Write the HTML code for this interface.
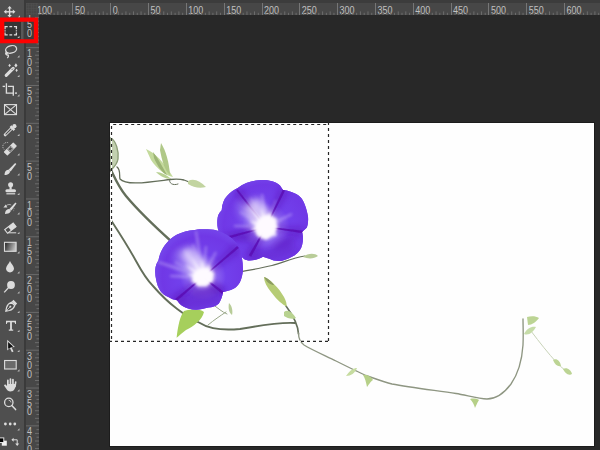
<!DOCTYPE html>
<html><head><meta charset="utf-8"><style>
html,body{margin:0;padding:0;width:600px;height:450px;overflow:hidden;background:#282828}
svg{display:block}
.rt{font-family:"Liberation Sans",sans-serif;font-size:10px;fill:#c0c0c0}
.rv{font-family:"Liberation Sans",sans-serif;font-size:10px;fill:#c0c0c0;text-anchor:middle}
</style></head><body>
<svg width="600" height="450" viewBox="0 0 600 450">
<rect x="0" y="0" width="600" height="450" fill="#282828"/><rect x="0" y="0" width="600" height="3" fill="#3c3c3c"/><rect x="26" y="3" width="574" height="12" fill="#474747"/><g clip-path="url(#hclip)"><rect x="19.53" y="11.4" width="1" height="3.6" fill="#6c6c6c"/><rect x="23.31" y="12.8" width="1" height="2.2" fill="#6c6c6c"/><rect x="27.10" y="11.4" width="1" height="3.6" fill="#6c6c6c"/><rect x="30.88" y="12.8" width="1" height="2.2" fill="#6c6c6c"/><rect x="35" y="3" width="1" height="12" fill="#767676"/><text transform="translate(37.06,13.6) scale(0.9,1)" class="rt">100</text><rect x="38.44" y="12.8" width="1" height="2.2" fill="#6c6c6c"/><rect x="42.22" y="11.4" width="1" height="3.6" fill="#6c6c6c"/><rect x="46.01" y="12.8" width="1" height="2.2" fill="#6c6c6c"/><rect x="49.79" y="11.4" width="1" height="3.6" fill="#6c6c6c"/><rect x="53.57" y="12.8" width="1" height="2.2" fill="#6c6c6c"/><rect x="57.35" y="11.4" width="1" height="3.6" fill="#6c6c6c"/><rect x="61.13" y="12.8" width="1" height="2.2" fill="#6c6c6c"/><rect x="64.92" y="11.4" width="1" height="3.6" fill="#6c6c6c"/><rect x="68.70" y="12.8" width="1" height="2.2" fill="#6c6c6c"/><rect x="72" y="3" width="1" height="12" fill="#767676"/><text transform="translate(74.88,13.6) scale(0.9,1)" class="rt">50</text><rect x="76.26" y="12.8" width="1" height="2.2" fill="#6c6c6c"/><rect x="80.04" y="11.4" width="1" height="3.6" fill="#6c6c6c"/><rect x="83.83" y="12.8" width="1" height="2.2" fill="#6c6c6c"/><rect x="87.61" y="11.4" width="1" height="3.6" fill="#6c6c6c"/><rect x="91.39" y="12.8" width="1" height="2.2" fill="#6c6c6c"/><rect x="95.17" y="11.4" width="1" height="3.6" fill="#6c6c6c"/><rect x="98.95" y="12.8" width="1" height="2.2" fill="#6c6c6c"/><rect x="102.74" y="11.4" width="1" height="3.6" fill="#6c6c6c"/><rect x="106.52" y="12.8" width="1" height="2.2" fill="#6c6c6c"/><rect x="110" y="3" width="1" height="12" fill="#767676"/><text transform="translate(112.70,13.6) scale(0.9,1)" class="rt">0</text><rect x="114.08" y="12.8" width="1" height="2.2" fill="#6c6c6c"/><rect x="117.86" y="11.4" width="1" height="3.6" fill="#6c6c6c"/><rect x="121.65" y="12.8" width="1" height="2.2" fill="#6c6c6c"/><rect x="125.43" y="11.4" width="1" height="3.6" fill="#6c6c6c"/><rect x="129.21" y="12.8" width="1" height="2.2" fill="#6c6c6c"/><rect x="132.99" y="11.4" width="1" height="3.6" fill="#6c6c6c"/><rect x="136.77" y="12.8" width="1" height="2.2" fill="#6c6c6c"/><rect x="140.56" y="11.4" width="1" height="3.6" fill="#6c6c6c"/><rect x="144.34" y="12.8" width="1" height="2.2" fill="#6c6c6c"/><rect x="148" y="3" width="1" height="12" fill="#767676"/><text transform="translate(150.52,13.6) scale(0.9,1)" class="rt">50</text><rect x="151.90" y="12.8" width="1" height="2.2" fill="#6c6c6c"/><rect x="155.68" y="11.4" width="1" height="3.6" fill="#6c6c6c"/><rect x="159.47" y="12.8" width="1" height="2.2" fill="#6c6c6c"/><rect x="163.25" y="11.4" width="1" height="3.6" fill="#6c6c6c"/><rect x="167.03" y="12.8" width="1" height="2.2" fill="#6c6c6c"/><rect x="170.81" y="11.4" width="1" height="3.6" fill="#6c6c6c"/><rect x="174.59" y="12.8" width="1" height="2.2" fill="#6c6c6c"/><rect x="178.38" y="11.4" width="1" height="3.6" fill="#6c6c6c"/><rect x="182.16" y="12.8" width="1" height="2.2" fill="#6c6c6c"/><rect x="186" y="3" width="1" height="12" fill="#767676"/><text transform="translate(188.34,13.6) scale(0.9,1)" class="rt">100</text><rect x="189.72" y="12.8" width="1" height="2.2" fill="#6c6c6c"/><rect x="193.50" y="11.4" width="1" height="3.6" fill="#6c6c6c"/><rect x="197.29" y="12.8" width="1" height="2.2" fill="#6c6c6c"/><rect x="201.07" y="11.4" width="1" height="3.6" fill="#6c6c6c"/><rect x="204.85" y="12.8" width="1" height="2.2" fill="#6c6c6c"/><rect x="208.63" y="11.4" width="1" height="3.6" fill="#6c6c6c"/><rect x="212.41" y="12.8" width="1" height="2.2" fill="#6c6c6c"/><rect x="216.20" y="11.4" width="1" height="3.6" fill="#6c6c6c"/><rect x="219.98" y="12.8" width="1" height="2.2" fill="#6c6c6c"/><rect x="224" y="3" width="1" height="12" fill="#767676"/><text transform="translate(226.16,13.6) scale(0.9,1)" class="rt">150</text><rect x="227.54" y="12.8" width="1" height="2.2" fill="#6c6c6c"/><rect x="231.32" y="11.4" width="1" height="3.6" fill="#6c6c6c"/><rect x="235.11" y="12.8" width="1" height="2.2" fill="#6c6c6c"/><rect x="238.89" y="11.4" width="1" height="3.6" fill="#6c6c6c"/><rect x="242.67" y="12.8" width="1" height="2.2" fill="#6c6c6c"/><rect x="246.45" y="11.4" width="1" height="3.6" fill="#6c6c6c"/><rect x="250.23" y="12.8" width="1" height="2.2" fill="#6c6c6c"/><rect x="254.02" y="11.4" width="1" height="3.6" fill="#6c6c6c"/><rect x="257.80" y="12.8" width="1" height="2.2" fill="#6c6c6c"/><rect x="262" y="3" width="1" height="12" fill="#767676"/><text transform="translate(263.98,13.6) scale(0.9,1)" class="rt">200</text><rect x="265.36" y="12.8" width="1" height="2.2" fill="#6c6c6c"/><rect x="269.14" y="11.4" width="1" height="3.6" fill="#6c6c6c"/><rect x="272.93" y="12.8" width="1" height="2.2" fill="#6c6c6c"/><rect x="276.71" y="11.4" width="1" height="3.6" fill="#6c6c6c"/><rect x="280.49" y="12.8" width="1" height="2.2" fill="#6c6c6c"/><rect x="284.27" y="11.4" width="1" height="3.6" fill="#6c6c6c"/><rect x="288.05" y="12.8" width="1" height="2.2" fill="#6c6c6c"/><rect x="291.84" y="11.4" width="1" height="3.6" fill="#6c6c6c"/><rect x="295.62" y="12.8" width="1" height="2.2" fill="#6c6c6c"/><rect x="299" y="3" width="1" height="12" fill="#767676"/><text transform="translate(301.80,13.6) scale(0.9,1)" class="rt">250</text><rect x="303.18" y="12.8" width="1" height="2.2" fill="#6c6c6c"/><rect x="306.96" y="11.4" width="1" height="3.6" fill="#6c6c6c"/><rect x="310.75" y="12.8" width="1" height="2.2" fill="#6c6c6c"/><rect x="314.53" y="11.4" width="1" height="3.6" fill="#6c6c6c"/><rect x="318.31" y="12.8" width="1" height="2.2" fill="#6c6c6c"/><rect x="322.09" y="11.4" width="1" height="3.6" fill="#6c6c6c"/><rect x="325.87" y="12.8" width="1" height="2.2" fill="#6c6c6c"/><rect x="329.66" y="11.4" width="1" height="3.6" fill="#6c6c6c"/><rect x="333.44" y="12.8" width="1" height="2.2" fill="#6c6c6c"/><rect x="337" y="3" width="1" height="12" fill="#767676"/><text transform="translate(339.62,13.6) scale(0.9,1)" class="rt">300</text><rect x="341.00" y="12.8" width="1" height="2.2" fill="#6c6c6c"/><rect x="344.78" y="11.4" width="1" height="3.6" fill="#6c6c6c"/><rect x="348.57" y="12.8" width="1" height="2.2" fill="#6c6c6c"/><rect x="352.35" y="11.4" width="1" height="3.6" fill="#6c6c6c"/><rect x="356.13" y="12.8" width="1" height="2.2" fill="#6c6c6c"/><rect x="359.91" y="11.4" width="1" height="3.6" fill="#6c6c6c"/><rect x="363.69" y="12.8" width="1" height="2.2" fill="#6c6c6c"/><rect x="367.48" y="11.4" width="1" height="3.6" fill="#6c6c6c"/><rect x="371.26" y="12.8" width="1" height="2.2" fill="#6c6c6c"/><rect x="375" y="3" width="1" height="12" fill="#767676"/><text transform="translate(377.44,13.6) scale(0.9,1)" class="rt">350</text><rect x="378.82" y="12.8" width="1" height="2.2" fill="#6c6c6c"/><rect x="382.60" y="11.4" width="1" height="3.6" fill="#6c6c6c"/><rect x="386.39" y="12.8" width="1" height="2.2" fill="#6c6c6c"/><rect x="390.17" y="11.4" width="1" height="3.6" fill="#6c6c6c"/><rect x="393.95" y="12.8" width="1" height="2.2" fill="#6c6c6c"/><rect x="397.73" y="11.4" width="1" height="3.6" fill="#6c6c6c"/><rect x="401.51" y="12.8" width="1" height="2.2" fill="#6c6c6c"/><rect x="405.30" y="11.4" width="1" height="3.6" fill="#6c6c6c"/><rect x="409.08" y="12.8" width="1" height="2.2" fill="#6c6c6c"/><rect x="413" y="3" width="1" height="12" fill="#767676"/><text transform="translate(415.26,13.6) scale(0.9,1)" class="rt">400</text><rect x="416.64" y="12.8" width="1" height="2.2" fill="#6c6c6c"/><rect x="420.42" y="11.4" width="1" height="3.6" fill="#6c6c6c"/><rect x="424.21" y="12.8" width="1" height="2.2" fill="#6c6c6c"/><rect x="427.99" y="11.4" width="1" height="3.6" fill="#6c6c6c"/><rect x="431.77" y="12.8" width="1" height="2.2" fill="#6c6c6c"/><rect x="435.55" y="11.4" width="1" height="3.6" fill="#6c6c6c"/><rect x="439.33" y="12.8" width="1" height="2.2" fill="#6c6c6c"/><rect x="443.12" y="11.4" width="1" height="3.6" fill="#6c6c6c"/><rect x="446.90" y="12.8" width="1" height="2.2" fill="#6c6c6c"/><rect x="451" y="3" width="1" height="12" fill="#767676"/><text transform="translate(453.08,13.6) scale(0.9,1)" class="rt">450</text><rect x="454.46" y="12.8" width="1" height="2.2" fill="#6c6c6c"/><rect x="458.24" y="11.4" width="1" height="3.6" fill="#6c6c6c"/><rect x="462.03" y="12.8" width="1" height="2.2" fill="#6c6c6c"/><rect x="465.81" y="11.4" width="1" height="3.6" fill="#6c6c6c"/><rect x="469.59" y="12.8" width="1" height="2.2" fill="#6c6c6c"/><rect x="473.37" y="11.4" width="1" height="3.6" fill="#6c6c6c"/><rect x="477.15" y="12.8" width="1" height="2.2" fill="#6c6c6c"/><rect x="480.94" y="11.4" width="1" height="3.6" fill="#6c6c6c"/><rect x="484.72" y="12.8" width="1" height="2.2" fill="#6c6c6c"/><rect x="488" y="3" width="1" height="12" fill="#767676"/><text transform="translate(490.90,13.6) scale(0.9,1)" class="rt">500</text><rect x="492.28" y="12.8" width="1" height="2.2" fill="#6c6c6c"/><rect x="496.06" y="11.4" width="1" height="3.6" fill="#6c6c6c"/><rect x="499.85" y="12.8" width="1" height="2.2" fill="#6c6c6c"/><rect x="503.63" y="11.4" width="1" height="3.6" fill="#6c6c6c"/><rect x="507.41" y="12.8" width="1" height="2.2" fill="#6c6c6c"/><rect x="511.19" y="11.4" width="1" height="3.6" fill="#6c6c6c"/><rect x="514.97" y="12.8" width="1" height="2.2" fill="#6c6c6c"/><rect x="518.76" y="11.4" width="1" height="3.6" fill="#6c6c6c"/><rect x="522.54" y="12.8" width="1" height="2.2" fill="#6c6c6c"/><rect x="526" y="3" width="1" height="12" fill="#767676"/><text transform="translate(528.72,13.6) scale(0.9,1)" class="rt">550</text><rect x="530.10" y="12.8" width="1" height="2.2" fill="#6c6c6c"/><rect x="533.88" y="11.4" width="1" height="3.6" fill="#6c6c6c"/><rect x="537.67" y="12.8" width="1" height="2.2" fill="#6c6c6c"/><rect x="541.45" y="11.4" width="1" height="3.6" fill="#6c6c6c"/><rect x="545.23" y="12.8" width="1" height="2.2" fill="#6c6c6c"/><rect x="549.01" y="11.4" width="1" height="3.6" fill="#6c6c6c"/><rect x="552.79" y="12.8" width="1" height="2.2" fill="#6c6c6c"/><rect x="556.58" y="11.4" width="1" height="3.6" fill="#6c6c6c"/><rect x="560.36" y="12.8" width="1" height="2.2" fill="#6c6c6c"/><rect x="564" y="3" width="1" height="12" fill="#767676"/><text transform="translate(566.54,13.6) scale(0.9,1)" class="rt">600</text><rect x="567.92" y="12.8" width="1" height="2.2" fill="#6c6c6c"/><rect x="571.70" y="11.4" width="1" height="3.6" fill="#6c6c6c"/><rect x="575.49" y="12.8" width="1" height="2.2" fill="#6c6c6c"/><rect x="579.27" y="11.4" width="1" height="3.6" fill="#6c6c6c"/><rect x="583.05" y="12.8" width="1" height="2.2" fill="#6c6c6c"/><rect x="586.83" y="11.4" width="1" height="3.6" fill="#6c6c6c"/><rect x="590.61" y="12.8" width="1" height="2.2" fill="#6c6c6c"/><rect x="594.40" y="11.4" width="1" height="3.6" fill="#6c6c6c"/><rect x="598.18" y="12.8" width="1" height="2.2" fill="#6c6c6c"/><rect x="602" y="3" width="1" height="12" fill="#767676"/><text transform="translate(604.36,13.6) scale(0.9,1)" class="rt">650</text></g><rect x="0" y="0" width="24" height="450" fill="#4f4f4f"/><rect x="24" y="0" width="2" height="450" fill="#3a3a3a"/><rect x="26" y="15" width="13" height="435" fill="#474747"/><rect x="26" y="3" width="12" height="12" fill="#474747"/><rect x="26.0" y="3" width="0.6" height="12" fill="#505050"/><rect x="28.5" y="3" width="0.6" height="12" fill="#505050"/><rect x="31.0" y="3" width="0.6" height="12" fill="#505050"/><rect x="33.5" y="3" width="0.6" height="12" fill="#505050"/><rect x="36.0" y="3" width="0.6" height="12" fill="#505050"/><rect x="26" y="3.0" width="12" height="0.6" fill="#505050"/><rect x="26" y="5.5" width="12" height="0.6" fill="#505050"/><rect x="26" y="8.0" width="12" height="0.6" fill="#505050"/><rect x="26" y="10.5" width="12" height="0.6" fill="#505050"/><rect x="26" y="13.0" width="12" height="0.6" fill="#505050"/><defs><clipPath id="vclip"><rect x="26" y="15" width="13" height="435"/></clipPath><clipPath id="hclip"><rect x="38" y="3" width="562" height="12"/></clipPath></defs><g clip-path="url(#vclip)"><rect x="26" y="9.34" width="13" height="1" fill="#6a6a6a"/><text transform="translate(29.6,19.44) scale(0.9,1)" class="rv">1</text><text transform="translate(29.6,28.34) scale(0.9,1)" class="rv">5</text><text transform="translate(29.6,37.24) scale(0.9,1)" class="rv">0</text><rect x="36.5" y="13.12" width="2.5" height="1" fill="#6c6c6c"/><rect x="35" y="16.90" width="4" height="1" fill="#6c6c6c"/><rect x="36.5" y="20.69" width="2.5" height="1" fill="#6c6c6c"/><rect x="35" y="24.47" width="4" height="1" fill="#6c6c6c"/><rect x="36.5" y="28.25" width="2.5" height="1" fill="#6c6c6c"/><rect x="35" y="32.03" width="4" height="1" fill="#6c6c6c"/><rect x="36.5" y="35.81" width="2.5" height="1" fill="#6c6c6c"/><rect x="35" y="39.60" width="4" height="1" fill="#6c6c6c"/><rect x="36.5" y="43.38" width="2.5" height="1" fill="#6c6c6c"/><rect x="26" y="47.16" width="13" height="1" fill="#6a6a6a"/><text transform="translate(29.6,57.26) scale(0.9,1)" class="rv">1</text><text transform="translate(29.6,66.16) scale(0.9,1)" class="rv">0</text><text transform="translate(29.6,75.06) scale(0.9,1)" class="rv">0</text><rect x="36.5" y="50.94" width="2.5" height="1" fill="#6c6c6c"/><rect x="35" y="54.72" width="4" height="1" fill="#6c6c6c"/><rect x="36.5" y="58.51" width="2.5" height="1" fill="#6c6c6c"/><rect x="35" y="62.29" width="4" height="1" fill="#6c6c6c"/><rect x="36.5" y="66.07" width="2.5" height="1" fill="#6c6c6c"/><rect x="35" y="69.85" width="4" height="1" fill="#6c6c6c"/><rect x="36.5" y="73.63" width="2.5" height="1" fill="#6c6c6c"/><rect x="35" y="77.42" width="4" height="1" fill="#6c6c6c"/><rect x="36.5" y="81.20" width="2.5" height="1" fill="#6c6c6c"/><rect x="26" y="84.98" width="13" height="1" fill="#6a6a6a"/><text transform="translate(29.6,95.08) scale(0.9,1)" class="rv">5</text><text transform="translate(29.6,103.98) scale(0.9,1)" class="rv">0</text><rect x="36.5" y="88.76" width="2.5" height="1" fill="#6c6c6c"/><rect x="35" y="92.54" width="4" height="1" fill="#6c6c6c"/><rect x="36.5" y="96.33" width="2.5" height="1" fill="#6c6c6c"/><rect x="35" y="100.11" width="4" height="1" fill="#6c6c6c"/><rect x="36.5" y="103.89" width="2.5" height="1" fill="#6c6c6c"/><rect x="35" y="107.67" width="4" height="1" fill="#6c6c6c"/><rect x="36.5" y="111.45" width="2.5" height="1" fill="#6c6c6c"/><rect x="35" y="115.24" width="4" height="1" fill="#6c6c6c"/><rect x="36.5" y="119.02" width="2.5" height="1" fill="#6c6c6c"/><rect x="26" y="122.80" width="13" height="1" fill="#6a6a6a"/><text transform="translate(29.6,132.90) scale(0.9,1)" class="rv">0</text><rect x="36.5" y="126.58" width="2.5" height="1" fill="#6c6c6c"/><rect x="35" y="130.36" width="4" height="1" fill="#6c6c6c"/><rect x="36.5" y="134.15" width="2.5" height="1" fill="#6c6c6c"/><rect x="35" y="137.93" width="4" height="1" fill="#6c6c6c"/><rect x="36.5" y="141.71" width="2.5" height="1" fill="#6c6c6c"/><rect x="35" y="145.49" width="4" height="1" fill="#6c6c6c"/><rect x="36.5" y="149.27" width="2.5" height="1" fill="#6c6c6c"/><rect x="35" y="153.06" width="4" height="1" fill="#6c6c6c"/><rect x="36.5" y="156.84" width="2.5" height="1" fill="#6c6c6c"/><rect x="26" y="160.62" width="13" height="1" fill="#6a6a6a"/><text transform="translate(29.6,170.72) scale(0.9,1)" class="rv">5</text><text transform="translate(29.6,179.62) scale(0.9,1)" class="rv">0</text><rect x="36.5" y="164.40" width="2.5" height="1" fill="#6c6c6c"/><rect x="35" y="168.18" width="4" height="1" fill="#6c6c6c"/><rect x="36.5" y="171.97" width="2.5" height="1" fill="#6c6c6c"/><rect x="35" y="175.75" width="4" height="1" fill="#6c6c6c"/><rect x="36.5" y="179.53" width="2.5" height="1" fill="#6c6c6c"/><rect x="35" y="183.31" width="4" height="1" fill="#6c6c6c"/><rect x="36.5" y="187.09" width="2.5" height="1" fill="#6c6c6c"/><rect x="35" y="190.88" width="4" height="1" fill="#6c6c6c"/><rect x="36.5" y="194.66" width="2.5" height="1" fill="#6c6c6c"/><rect x="26" y="198.44" width="13" height="1" fill="#6a6a6a"/><text transform="translate(29.6,208.54) scale(0.9,1)" class="rv">1</text><text transform="translate(29.6,217.44) scale(0.9,1)" class="rv">0</text><text transform="translate(29.6,226.34) scale(0.9,1)" class="rv">0</text><rect x="36.5" y="202.22" width="2.5" height="1" fill="#6c6c6c"/><rect x="35" y="206.00" width="4" height="1" fill="#6c6c6c"/><rect x="36.5" y="209.79" width="2.5" height="1" fill="#6c6c6c"/><rect x="35" y="213.57" width="4" height="1" fill="#6c6c6c"/><rect x="36.5" y="217.35" width="2.5" height="1" fill="#6c6c6c"/><rect x="35" y="221.13" width="4" height="1" fill="#6c6c6c"/><rect x="36.5" y="224.91" width="2.5" height="1" fill="#6c6c6c"/><rect x="35" y="228.70" width="4" height="1" fill="#6c6c6c"/><rect x="36.5" y="232.48" width="2.5" height="1" fill="#6c6c6c"/><rect x="26" y="236.26" width="13" height="1" fill="#6a6a6a"/><text transform="translate(29.6,246.36) scale(0.9,1)" class="rv">1</text><text transform="translate(29.6,255.26) scale(0.9,1)" class="rv">5</text><text transform="translate(29.6,264.16) scale(0.9,1)" class="rv">0</text><rect x="36.5" y="240.04" width="2.5" height="1" fill="#6c6c6c"/><rect x="35" y="243.82" width="4" height="1" fill="#6c6c6c"/><rect x="36.5" y="247.61" width="2.5" height="1" fill="#6c6c6c"/><rect x="35" y="251.39" width="4" height="1" fill="#6c6c6c"/><rect x="36.5" y="255.17" width="2.5" height="1" fill="#6c6c6c"/><rect x="35" y="258.95" width="4" height="1" fill="#6c6c6c"/><rect x="36.5" y="262.73" width="2.5" height="1" fill="#6c6c6c"/><rect x="35" y="266.52" width="4" height="1" fill="#6c6c6c"/><rect x="36.5" y="270.30" width="2.5" height="1" fill="#6c6c6c"/><rect x="26" y="274.08" width="13" height="1" fill="#6a6a6a"/><text transform="translate(29.6,284.18) scale(0.9,1)" class="rv">2</text><text transform="translate(29.6,293.08) scale(0.9,1)" class="rv">0</text><text transform="translate(29.6,301.98) scale(0.9,1)" class="rv">0</text><rect x="36.5" y="277.86" width="2.5" height="1" fill="#6c6c6c"/><rect x="35" y="281.64" width="4" height="1" fill="#6c6c6c"/><rect x="36.5" y="285.43" width="2.5" height="1" fill="#6c6c6c"/><rect x="35" y="289.21" width="4" height="1" fill="#6c6c6c"/><rect x="36.5" y="292.99" width="2.5" height="1" fill="#6c6c6c"/><rect x="35" y="296.77" width="4" height="1" fill="#6c6c6c"/><rect x="36.5" y="300.55" width="2.5" height="1" fill="#6c6c6c"/><rect x="35" y="304.34" width="4" height="1" fill="#6c6c6c"/><rect x="36.5" y="308.12" width="2.5" height="1" fill="#6c6c6c"/><rect x="26" y="311.90" width="13" height="1" fill="#6a6a6a"/><text transform="translate(29.6,322.00) scale(0.9,1)" class="rv">2</text><text transform="translate(29.6,330.90) scale(0.9,1)" class="rv">5</text><text transform="translate(29.6,339.80) scale(0.9,1)" class="rv">0</text><rect x="36.5" y="315.68" width="2.5" height="1" fill="#6c6c6c"/><rect x="35" y="319.46" width="4" height="1" fill="#6c6c6c"/><rect x="36.5" y="323.25" width="2.5" height="1" fill="#6c6c6c"/><rect x="35" y="327.03" width="4" height="1" fill="#6c6c6c"/><rect x="36.5" y="330.81" width="2.5" height="1" fill="#6c6c6c"/><rect x="35" y="334.59" width="4" height="1" fill="#6c6c6c"/><rect x="36.5" y="338.37" width="2.5" height="1" fill="#6c6c6c"/><rect x="35" y="342.16" width="4" height="1" fill="#6c6c6c"/><rect x="36.5" y="345.94" width="2.5" height="1" fill="#6c6c6c"/><rect x="26" y="349.72" width="13" height="1" fill="#6a6a6a"/><text transform="translate(29.6,359.82) scale(0.9,1)" class="rv">3</text><text transform="translate(29.6,368.72) scale(0.9,1)" class="rv">0</text><text transform="translate(29.6,377.62) scale(0.9,1)" class="rv">0</text><rect x="36.5" y="353.50" width="2.5" height="1" fill="#6c6c6c"/><rect x="35" y="357.28" width="4" height="1" fill="#6c6c6c"/><rect x="36.5" y="361.07" width="2.5" height="1" fill="#6c6c6c"/><rect x="35" y="364.85" width="4" height="1" fill="#6c6c6c"/><rect x="36.5" y="368.63" width="2.5" height="1" fill="#6c6c6c"/><rect x="35" y="372.41" width="4" height="1" fill="#6c6c6c"/><rect x="36.5" y="376.19" width="2.5" height="1" fill="#6c6c6c"/><rect x="35" y="379.98" width="4" height="1" fill="#6c6c6c"/><rect x="36.5" y="383.76" width="2.5" height="1" fill="#6c6c6c"/><rect x="26" y="387.54" width="13" height="1" fill="#6a6a6a"/><text transform="translate(29.6,397.64) scale(0.9,1)" class="rv">3</text><text transform="translate(29.6,406.54) scale(0.9,1)" class="rv">5</text><text transform="translate(29.6,415.44) scale(0.9,1)" class="rv">0</text><rect x="36.5" y="391.32" width="2.5" height="1" fill="#6c6c6c"/><rect x="35" y="395.10" width="4" height="1" fill="#6c6c6c"/><rect x="36.5" y="398.89" width="2.5" height="1" fill="#6c6c6c"/><rect x="35" y="402.67" width="4" height="1" fill="#6c6c6c"/><rect x="36.5" y="406.45" width="2.5" height="1" fill="#6c6c6c"/><rect x="35" y="410.23" width="4" height="1" fill="#6c6c6c"/><rect x="36.5" y="414.01" width="2.5" height="1" fill="#6c6c6c"/><rect x="35" y="417.80" width="4" height="1" fill="#6c6c6c"/><rect x="36.5" y="421.58" width="2.5" height="1" fill="#6c6c6c"/><rect x="26" y="425.36" width="13" height="1" fill="#6a6a6a"/><text transform="translate(29.6,435.46) scale(0.9,1)" class="rv">4</text><text transform="translate(29.6,444.36) scale(0.9,1)" class="rv">0</text><text transform="translate(29.6,453.26) scale(0.9,1)" class="rv">0</text><rect x="36.5" y="429.14" width="2.5" height="1" fill="#6c6c6c"/><rect x="35" y="432.92" width="4" height="1" fill="#6c6c6c"/><rect x="36.5" y="436.71" width="2.5" height="1" fill="#6c6c6c"/><rect x="35" y="440.49" width="4" height="1" fill="#6c6c6c"/><rect x="36.5" y="444.27" width="2.5" height="1" fill="#6c6c6c"/><rect x="35" y="448.05" width="4" height="1" fill="#6c6c6c"/><rect x="36.5" y="451.83" width="2.5" height="1" fill="#6c6c6c"/></g><rect x="26" y="0" width="13" height="3" fill="#3c3c3c"/><g><rect x="4" y="21.5" width="17" height="18" fill="#343434"/><rect x="21" y="21.5" width="2.6" height="18" fill="#585858"/><rect x="23.6" y="21.5" width="11" height="18" fill="#3c3c3c"/><text transform="translate(29.6,28.34) scale(0.9,1)" class="rv">5</text><text transform="translate(29.6,37.24) scale(0.9,1)" class="rv">0</text><g fill="#dcdcdc"><path d="M9.6,6 L11.8,8.6 L7.4,8.6 Z"/><path d="M9.6,17.6 L11.8,15 L7.4,15 Z"/><path d="M3.8,11.8 L6.4,9.6 L6.4,14 Z"/><path d="M15.4,11.8 L12.8,9.6 L12.8,14 Z"/><rect x="8.9" y="8" width="1.4" height="7.6"/><rect x="6" y="11.1" width="7.6" height="1.4"/></g><path d="M17.8,17.5 L20,17.5 L20,15.3 Z" fill="#bdbdbd"/><g fill="none" stroke="#dcdcdc" stroke-width="1.3"><path d="M5,29.2 V26.6 H7.7"/><path d="M9.4,26.6 H12.2"/><path d="M13.9,26.6 H16.4 V29.2"/><path d="M16.4,30.3 V31.4"/><path d="M16.4,32.5 V34.9 H13.9"/><path d="M12.2,34.9 H9.4"/><path d="M7.7,34.9 H5 V32.5"/><path d="M5,30.3 V31.4"/></g><path d="M17.3,38 L19.5,38 L19.5,35.8 Z" fill="#bdbdbd"/><g fill="none" stroke="#dcdcdc" stroke-width="1.3"><ellipse cx="11.1" cy="49.4" rx="5.6" ry="3.7" transform="rotate(-14 11.1 49.4)"/><path d="M6.4,52 C5,54 6.5,55.5 8.2,55 C8.8,56.2 8.2,57.3 7.2,57.8"/></g><circle cx="6.6" cy="53.4" r="1.3" fill="#dcdcdc"/><path d="M17.3,57.5 L19.5,57.5 L19.5,55.3 Z" fill="#bdbdbd"/><g><path d="M6.2,75.4 L13.2,68.4" stroke="#dcdcdc" stroke-width="3.1" stroke-linecap="round"/><path d="M11.9,69.7 L12.7,68.9" stroke="#6a6a6a" stroke-width="1" stroke-linecap="round"/></g><g fill="#dcdcdc"><path d="M9.6,63.7 L10.875,65.4 L9.6,67.10000000000001 L8.325,65.4 Z"/><path d="M15.9,63.300000000000004 L17.475,65.4 L15.9,67.5 L14.325,65.4 Z"/><path d="M16.6,68.7 L17.8,70.3 L16.6,71.89999999999999 L15.400000000000002,70.3 Z"/></g><path d="M17.3,77 L19.5,77 L19.5,74.8 Z" fill="#bdbdbd"/><g fill="none" stroke="#dcdcdc" stroke-width="1.35"><path d="M6.4,83.2 V93.1 H13.3"/><path d="M2.6,86.4 H5"/><path d="M7.9,86.4 H13.3 V95.7"/><path d="M14.9,93.1 H17"/></g><path d="M17.3,96.5 L19.5,96.5 L19.5,94.3 Z" fill="#bdbdbd"/><g fill="none" stroke="#dcdcdc" stroke-width="1.1"><rect x="4.5" y="104.6" width="12" height="10"/><path d="M4.5,104.6 L16.5,114.6 M16.5,104.6 L4.5,114.6"/></g><g><path d="M5.2,134.8 L11.6,128.4" stroke="#dcdcdc" stroke-width="3" stroke-linecap="round"/><path d="M5.9,134.1 L11,129" stroke="#4f4f4f" stroke-width="1.1" stroke-linecap="round"/><path d="M10.5,126.2 L14.4,130.1" stroke="#dcdcdc" stroke-width="2.4"/><circle cx="14.4" cy="126.2" r="2.1" fill="#dcdcdc"/></g><path d="M17.3,136 L19.5,136 L19.5,133.8 Z" fill="#bdbdbd"/><g transform="rotate(-45 10.3 149)"><rect x="3.5" y="146.4" width="13.6" height="5.2" rx="0.6" fill="#dcdcdc"/><rect x="7.9" y="146.9" width="4.8" height="4.2" fill="#4f4f4f"/><rect x="8.5" y="147.5" width="3.6" height="3" fill="none" stroke="#c8c8c8" stroke-width="0.7"/></g><path d="M4.2,149.5 A4,4 0 0 1 8.8,143" fill="none" stroke="#dcdcdc" stroke-width="0.8" stroke-dasharray="1,0.9"/><path d="M17.3,155.5 L19.5,155.5 L19.5,153.3 Z" fill="#bdbdbd"/><g fill="#dcdcdc"><path d="M15.2,163 L16.3,164 L10.6,171.4 L8.5,169.8 Z"/><path d="M4.5,175 C4.5,172 6,169.6 8.3,169.8 C9.8,170 10.2,171.4 9.8,172.4 C8.8,174.4 6.5,175 4.5,175 Z"/></g><path d="M17.3,175.5 L19.5,175.5 L19.5,173.3 Z" fill="#bdbdbd"/><g fill="#dcdcdc"><circle cx="10.6" cy="184.8" r="2.5"/><rect x="9.5" y="186" width="2.2" height="3.6"/><rect x="5.4" y="189.2" width="10.6" height="3.1" rx="1.5"/><rect x="6.4" y="193.2" width="8.8" height="1.2"/></g><path d="M17.3,195 L19.5,195 L19.5,192.8 Z" fill="#bdbdbd"/><g fill="#dcdcdc"><path d="M15.4,202.4 L16.5,203.4 L11.4,210.6 L9.4,209 Z"/><path d="M5,214 C5,211.2 6.6,208.8 9,209 C10.6,209.2 11,210.6 10.6,211.6 C9.6,213.6 7.2,214 5,214 Z"/><path d="M3.4,207.5 L5.8,204.6 L7.4,207.5 Z"/></g><path d="M6.3,205.5 C8,204.3 10,204.3 11.2,205" fill="none" stroke="#dcdcdc" stroke-width="0.7"/><path d="M14.2,208 L13.4,211.6" fill="none" stroke="#9a9a9a" stroke-width="0.8" stroke-dasharray="1,0.8"/><path d="M17.3,214.5 L19.5,214.5 L19.5,212.3 Z" fill="#bdbdbd"/><g transform="rotate(-38 10.3 228.2)"><rect x="5" y="225.9" width="10.8" height="4.6" fill="none" stroke="#dcdcdc" stroke-width="1.1"/><rect x="9.4" y="225.9" width="6.4" height="4.6" fill="#dcdcdc"/></g><path d="M8,232.8 H16.2" stroke="#dcdcdc" stroke-width="1"/><path d="M17.3,234 L19.5,234 L19.5,231.8 Z" fill="#bdbdbd"/><defs><linearGradient id="gr" x1="0" x2="1" y1="0" y2="0.3"><stop offset="0" stop-color="#1e1e1e"/><stop offset="1" stop-color="#bcbcbc"/></linearGradient></defs><rect x="4.5" y="242.3" width="11.6" height="9" fill="url(#gr)" stroke="#dcdcdc" stroke-width="1.1"/><path d="M17.3,253.5 L19.5,253.5 L19.5,251.3 Z" fill="#bdbdbd"/><path d="M10,261 C11,263.5 14,266 14,268.6 C14,271 12.2,272.4 10,272.4 C7.8,272.4 6,271 6,268.6 C6,266 9,263.5 10,261 Z" fill="#dcdcdc"/><path d="M17.3,273.5 L19.5,273.5 L19.5,271.3 Z" fill="#bdbdbd"/><circle cx="11" cy="285" r="3.9" fill="#dcdcdc"/><path d="M8.4,287.8 L4.2,292.4" stroke="#dcdcdc" stroke-width="1.3"/><path d="M17.3,293.5 L19.5,293.5 L19.5,291.3 Z" fill="#bdbdbd"/><g transform="rotate(45 10.2 306.8)"><rect x="7.6" y="299.6" width="5.2" height="2.6" fill="#dcdcdc"/><path d="M7.8,302.8 H12.6 C13.6,305 13.6,307.6 12.2,310 L10.2,313 L8.2,310 C6.8,307.6 6.8,305 7.8,302.8 Z" fill="none" stroke="#dcdcdc" stroke-width="1.2"/><circle cx="10.2" cy="306.6" r="1" fill="#dcdcdc"/><path d="M10.2,307 V312.6" stroke="#dcdcdc" stroke-width="0.7"/></g><path d="M17.3,313 L19.5,313 L19.5,310.8 Z" fill="#bdbdbd"/><path d="M6,320.8 H16 V324 H15.2 C15,322.6 14.6,322.2 13.4,322.2 H11.9 V329.4 H13.2 V330.8 H8.8 V329.4 H10.1 V322.2 H8.6 C7.4,322.2 7,322.6 6.8,324 H6 Z" fill="#dcdcdc"/><path d="M17.3,332 L19.5,332 L19.5,329.8 Z" fill="#bdbdbd"/><path d="M7.2,339.8 L7.2,350.6 L9.9,348.1 L11.9,352.2 L13.5,351.4 L11.5,347.3 L14.9,347 Z" fill="#dcdcdc"/><path d="M8.1,341.9 L8.1,348.7 L13.1,346.4 Z" fill="#111111"/><path d="M17.3,352 L19.5,352 L19.5,349.8 Z" fill="#bdbdbd"/><rect x="4.6" y="360.5" width="11.6" height="8.5" fill="#6a6a6a" stroke="#dcdcdc" stroke-width="1.1"/><path d="M17.3,371.5 L19.5,371.5 L19.5,369.3 Z" fill="#bdbdbd"/><g fill="#dcdcdc"><rect x="7" y="379.6" width="1.7" height="7" rx="0.85"/><rect x="9.6" y="378.2" width="1.7" height="8" rx="0.85"/><rect x="12.1" y="378.8" width="1.7" height="8" rx="0.85"/><rect x="14.6" y="381.2" width="1.6" height="6" rx="0.8" transform="rotate(8 15.4 384)"/><path d="M7,384 H15.8 C15.8,386.5 15,389 13.8,390.3 C12.8,391.2 11.6,391.4 10.4,391.4 C8.4,391.4 7.4,390.5 6.8,389.6 L4,385.6 C4.2,384.6 5.3,384.3 6,384.9 L7,386 Z"/></g><path d="M17.3,391.5 L19.5,391.5 L19.5,389.3 Z" fill="#bdbdbd"/><circle cx="8.8" cy="402.4" r="4.2" fill="none" stroke="#dcdcdc" stroke-width="1.3"/><path d="M11.8,405.5 L15.6,409.6" stroke="#dcdcdc" stroke-width="1.5" stroke-linecap="round"/><path d="M8.6,400.2 A2.4,2.4 0 0 1 11,402.4" fill="none" stroke="#dcdcdc" stroke-width="0.8"/><g fill="#dcdcdc"><circle cx="5.4" cy="424" r="1.4"/><circle cx="10.2" cy="424" r="1.4"/><circle cx="14.8" cy="424" r="1.4"/></g><path d="M17.3,430.5 L19.5,430.5 L19.5,428.3 Z" fill="#bdbdbd"/><rect x="1.8" y="440.7" width="5" height="5" fill="#f0f0f0"/><rect x="-1" y="437.9" width="4.8" height="4.6" fill="#000" stroke="#f0f0f0" stroke-width="0.9"/><path d="M12.8,439.8 H17.2 V444.2" fill="none" stroke="#dcdcdc" stroke-width="1"/><path d="M11.4,439.8 L13.6,437.8 V441.8 Z M17.2,446 L15.2,443.6 H19.2 Z" fill="#dcdcdc"/></g><g><defs><clipPath id="imgclip"><rect x="110" y="123" width="484" height="323"/></clipPath><filter id="bl1" x="-20%" y="-20%" width="140%" height="140%"><feGaussianBlur stdDeviation="0.6"/></filter><filter id="bl2" x="-30%" y="-30%" width="160%" height="160%"><feGaussianBlur stdDeviation="1.6"/></filter><filter id="bl3" x="-50%" y="-50%" width="200%" height="200%"><feGaussianBlur stdDeviation="3"/></filter><radialGradient id="fl1" cx="202" cy="277" r="48" gradientUnits="userSpaceOnUse"><stop offset="0" stop-color="#ffffff"/><stop offset="0.16" stop-color="#f4eefc"/><stop offset="0.32" stop-color="#9f80ec"/><stop offset="0.55" stop-color="#6a3ee0"/><stop offset="1" stop-color="#6438dc"/></radialGradient><radialGradient id="fl2" cx="265" cy="228" r="50" gradientUnits="userSpaceOnUse"><stop offset="0" stop-color="#ffffff"/><stop offset="0.16" stop-color="#f4eefc"/><stop offset="0.32" stop-color="#9f80ec"/><stop offset="0.55" stop-color="#6a3ee0"/><stop offset="1" stop-color="#6438dc"/></radialGradient></defs><rect x="109" y="122" width="486" height="325" fill="#1c1c1c"/><g clip-path="url(#imgclip)"><rect x="110" y="123" width="484" height="323" fill="#fefefe"/><path d="M111,138 C116,141 119,151 118,159 C117,165 113,168 111,170 Z" fill="#c2d0b0" stroke="#8c9e78" stroke-width="1.4" filter="url(#bl1)"/><g fill="none" stroke="#646e5a" stroke-linecap="round" filter="url(#bl1)"><path d="M111,170 C114,176 118,186 126,196 C136,208 152,224 172,242" stroke-width="2.4"/><path d="M117,167 C121,170 119,176 120,179 C126,186 150,182 170,179.5 C176,179 180,179 184,180 C187,181 189,182 191,183" stroke-width="1.3"/><path d="M170,179 C168,183 173,186 178,184" stroke-width="1"/><path d="M111.5,221 C120,234 130,250 136,261 C142,272 147,280 153,286 C160,294 168,302 176,308 C184,314 190,319 198,322 C206,327 216,331 240,329 C262,325 280,322 295,323" stroke-width="1.9"/><path d="M286,306 C292,314 298,324 298.5,334" stroke-width="1.6"/><path d="M298.5,333 C298.5,338 300,342 304,345 C312,350 326,356 336,361 C348,367 358,372 366,375.5 C376,379 384,382 392,384 C410,387.5 436,390.5 456,393.5 C466,395 478,399 487,399 C496,399 505,392 511,384 C518,374 522,360 523,345 C523.5,335 523,325 523,319" stroke="#8e9682" stroke-width="1.35"/><path d="M240,272 C250,270 262,268 272,265.5 C282,263 292,258 305,256" stroke-width="1.2"/><path d="M208,325 C214,320 220,316 226,312" stroke="#9aa88a" stroke-width="1"/><path d="M212,304 C218,308 222,312 227,314" stroke="#9aa88a" stroke-width="1"/><path d="M531,331 C540,343 548,353 557,363 C562,368 566,371 570,374" stroke="#c8d2b8" stroke-width="1"/></g><g filter="url(#bl1)"><path d="M146,149 C155,153 163,161 173,177 C166,176 157,169 151,160 Z" fill="#c4da9c"/><path d="M161,143 C166,151 169,162 170,175 C165,171 162,161 160,150 Z" fill="#b0c888"/><path d="M153,152 C158,158 162,166 167,175 C162,173 157,165 154,158 Z" fill="#9cb474"/><path d="M156,172 C161,172 167,175 171,179 C165,179 160,176 156,172 Z" fill="#b8d092"/><path d="M188,181 C194,178 200,181 206,187 C199,189 193,187 188,184 Z" fill="#c2d4a0"/><path d="M264,277 C270,279 279,288 284,297 C286,301 287,304 286.5,306.5 C283,305 277,300 271,292 C267,287 264,282 264,277 Z" fill="#b6cc74"/><path d="M264,277 C268,278 272,282 274,285 C271,285 267,283 264,277 Z" fill="#8c9c60"/><path d="M284,312 C288,309 292,312 296,318 C292,320 287,318 284,316 Z" fill="#b8d290"/><path d="M176.6,337.8 C178,326 180,316 184,311 C192,309 200,309 204,312 C202,320 194,326 186,330 C182,333 179,336 176.6,337.8 Z" fill="#a6cf5c"/><path d="M229,303 C232,306 233,311 232,315 C229,313 228,308 229,303 Z" fill="#b8cc98"/><path d="M303,257 C308,253 315,253 318,256 C314,259 308,259 303,257 Z" fill="#b8cc98"/><path d="M346,376 C350,370 354,368 357,368 C355,373 351,376 346,376 Z" fill="#c6dca0"/><path d="M363,375 C368,374 372,378 373,380 C370,382 368,386 367,387 C366,382 365,378 363,375 Z" fill="#b6d088"/><path d="M470,399 C474,398 478,399 479,400 C477,403 476,406 475,408 C474,404 472,401 470,399 Z" fill="#b6d088"/><path d="M527,317 C531,316 536,316 539,318 C536,322 532,325 528,325 Z" fill="#bcd494"/><path d="M524,334 C527,328 532,326 536,327 C533,332 529,336 524,334 Z" fill="#c6dca8"/><path d="M553,360 C556,358 560,360 561,366 C558,367 555,365 553,360 Z" fill="#bcd494"/><path d="M563,369 C567,367 571,370 572,374 C568,376 565,373 563,369 Z" fill="#bcd494"/></g><defs><clipPath id="cf2"><path d="M261,180 C266,179.5 276,181 280,185.5 L283,190 C287,190 296,193 300,196.7 C304,200 307,210 308,216.7 C308.5,222 307.5,226 306.7,227.8 L302,232 C303.5,236 303.5,245 300,250 C297,254 294,256 292,256.7 C287,259 283,261 279,261 C275,261 272,260 270,259 L263,256.7 C258,260 248,262 244,259 C239,255 237,250 235.6,246.5 C230,244 224,240 220,234 C217,230 217,222 217.5,218.8 C218,214 220,212 221.7,210.2 C222,204 224,199 227,196 C230,192 234,190 237.7,187.9 C244,183 252,180.5 261,180 Z"/></clipPath><radialGradient id="gf2" cx="266" cy="227" r="50" gradientUnits="userSpaceOnUse"><stop offset="0" stop-color="#f4eefe"/><stop offset="0.14" stop-color="#d4c2fa"/><stop offset="0.3" stop-color="#8a62f0"/><stop offset="0.48" stop-color="#7240ec"/><stop offset="0.85" stop-color="#7038e6"/><stop offset="1" stop-color="#7444ea"/></radialGradient></defs><path d="M261,180 C266,179.5 276,181 280,185.5 L283,190 C287,190 296,193 300,196.7 C304,200 307,210 308,216.7 C308.5,222 307.5,226 306.7,227.8 L302,232 C303.5,236 303.5,245 300,250 C297,254 294,256 292,256.7 C287,259 283,261 279,261 C275,261 272,260 270,259 L263,256.7 C258,260 248,262 244,259 C239,255 237,250 235.6,246.5 C230,244 224,240 220,234 C217,230 217,222 217.5,218.8 C218,214 220,212 221.7,210.2 C222,204 224,199 227,196 C230,192 234,190 237.7,187.9 C244,183 252,180.5 261,180 Z" fill="#7038e6" filter="url(#bl1)"/><g clip-path="url(#cf2)"><rect x="216" y="177" width="100" height="100" fill="url(#gf2)"/><g fill="#d0bcfa" filter="url(#bl2)" opacity="0.45"><path d="M268.6,225.6 L250.9,197.5 L249.1,198.5 L263.4,228.4 Z"/><path d="M268.5,226.7 L263.0,193.9 L261.0,194.1 L263.5,227.3 Z"/><path d="M267.5,224.4 L240.5,211.1 L239.5,212.9 L264.5,229.6 Z"/><path d="M267.9,227.7 L276.9,200.3 L275.1,199.7 L264.1,226.3 Z"/><path d="M266.1,224.5 L234.0,225.0 L234.0,227.0 L265.9,229.5 Z"/><path d="M266.9,228.8 L292.4,214.9 L291.6,213.1 L265.1,225.2 Z"/></g><ellipse cx="253" cy="214" rx="20" ry="13" transform="rotate(45 253 214)" fill="#a088f2" opacity="0.45" filter="url(#bl3)"/><g fill="#5810b0" filter="url(#bl3)" opacity="0.45"><path d="M267.2,226.1 L240.1,187.5 L233.9,192.5 L264.8,227.9 Z"/><path d="M267.3,227.7 L288.0,192.0 L280.0,188.0 L264.7,226.3 Z"/><path d="M265.8,228.5 L302.4,236.5 L303.6,227.5 L266.2,225.5 Z"/><path d="M264.7,226.3 L245.6,253.6 L254.4,258.4 L267.3,227.7 Z"/><path d="M265.6,225.6 L224.8,233.7 L227.2,242.3 L266.4,228.4 Z"/></g><g fill="#5c0cb4" filter="url(#bl1)" opacity="0.85"><path d="M266.5,226.6 L237.8,189.4 L236.2,190.6 L265.5,227.4 Z"/><path d="M266.5,227.3 L285.1,190.5 L282.9,189.5 L265.5,226.7 Z"/><path d="M265.9,227.6 L302.8,233.2 L303.2,230.8 L266.1,226.4 Z"/><path d="M265.5,226.7 L248.8,255.3 L251.2,256.7 L266.5,227.3 Z"/><path d="M265.8,226.4 L225.7,236.8 L226.3,239.2 L266.2,227.6 Z"/></g><g filter="url(#bl3)" fill="#580cb0" opacity="0.45"><ellipse cx="284" cy="243" rx="13" ry="5" transform="rotate(-25 284 243)"/><ellipse cx="245" cy="238" rx="10" ry="4" transform="rotate(10 245 238)"/><ellipse cx="272" cy="254" rx="26" ry="7" transform="rotate(-12 272 254)" opacity="0.6"/></g></g><path d="M278.0,227.0 L274.5,230.1 L276.7,236.0 L269.8,235.2 L266.0,240.0 L262.2,235.2 L256.8,234.7 L257.8,230.8 L250.2,229.8 L257.0,226.2 L249.1,220.8 L258.6,221.8 L250.6,208.6 L261.8,219.0 L260.8,207.7 L266.0,218.0 L270.1,211.5 L270.8,219.4 L276.7,218.0 L274.5,223.9 Z" fill="#f8f2ff" filter="url(#bl2)" opacity="0.9"/><path d="M258,234 L243,208 L258,197 L277,222 Z" fill="#f4ecff" filter="url(#bl3)" opacity="0.65"/><g filter="url(#bl2)"><ellipse cx="266" cy="227" rx="10" ry="12" transform="rotate(25 266 227)" fill="#fffcff" opacity="0.92"/></g><defs><clipPath id="cf1"><path d="M194.9,229.9 C198,229.3 201,229.3 204.3,229.3 C209,229.3 213,229.6 216.8,230.4 C221,231.5 226,234 229.3,236.6 C233,239.5 236,242 237.7,245 C240,249 241.5,253 241.9,257.5 C242.6,262 243,266 242.9,270 C242.6,275 241.5,279 239.8,282.5 C238,285.5 236,287.5 233.5,288.8 C230,290.5 226,291.6 223,292 C222.5,296 221,300 218.9,303.4 C216,306 212,307.2 208.5,307.6 C204,308.5 200,309.7 196,309.7 C191,309.7 186.5,308.5 183.4,306.6 C180.5,305 178.5,302.5 177.1,300.3 C174,299.7 171,298.7 168.8,297.2 C165,295.5 162,293.5 160.4,290.9 C158,287.5 157,284 156.3,280.5 C155.5,277 155,273.5 155.2,270 C155.5,266.5 156.5,263 158.4,260.6 C158.8,258 159.5,255.5 160.4,253.3 C162,249 164,246 166.7,242.9 C169.5,239.5 173,236.5 177.1,234.5 C182,232 188,230.5 194.9,229.9 Z"/></clipPath><radialGradient id="gf1" cx="203" cy="277" r="48" gradientUnits="userSpaceOnUse"><stop offset="0" stop-color="#f4eefe"/><stop offset="0.14" stop-color="#d4c2fa"/><stop offset="0.3" stop-color="#8a62f0"/><stop offset="0.48" stop-color="#7240ec"/><stop offset="0.85" stop-color="#7038e6"/><stop offset="1" stop-color="#7444ea"/></radialGradient></defs><path d="M194.9,229.9 C198,229.3 201,229.3 204.3,229.3 C209,229.3 213,229.6 216.8,230.4 C221,231.5 226,234 229.3,236.6 C233,239.5 236,242 237.7,245 C240,249 241.5,253 241.9,257.5 C242.6,262 243,266 242.9,270 C242.6,275 241.5,279 239.8,282.5 C238,285.5 236,287.5 233.5,288.8 C230,290.5 226,291.6 223,292 C222.5,296 221,300 218.9,303.4 C216,306 212,307.2 208.5,307.6 C204,308.5 200,309.7 196,309.7 C191,309.7 186.5,308.5 183.4,306.6 C180.5,305 178.5,302.5 177.1,300.3 C174,299.7 171,298.7 168.8,297.2 C165,295.5 162,293.5 160.4,290.9 C158,287.5 157,284 156.3,280.5 C155.5,277 155,273.5 155.2,270 C155.5,266.5 156.5,263 158.4,260.6 C158.8,258 159.5,255.5 160.4,253.3 C162,249 164,246 166.7,242.9 C169.5,239.5 173,236.5 177.1,234.5 C182,232 188,230.5 194.9,229.9 Z" fill="#7038e6" filter="url(#bl1)"/><g clip-path="url(#cf1)"><rect x="155" y="229" width="96" height="96" fill="url(#gf1)"/><g fill="#d0bcfa" filter="url(#bl2)" opacity="0.45"><path d="M205.5,275.3 L184.8,249.4 L183.2,250.6 L200.5,278.7 Z"/><path d="M205.4,276.3 L194.0,243.7 L192.0,244.3 L200.6,277.7 Z"/><path d="M204.4,274.4 L175.5,261.1 L174.5,262.9 L201.6,279.6 Z"/><path d="M205.0,277.2 L207.0,246.1 L205.0,245.9 L201.0,276.8 Z"/><path d="M203.1,274.5 L170.0,275.0 L170.0,277.0 L202.9,279.5 Z"/><path d="M204.8,277.9 L216.9,252.5 L215.1,251.5 L201.2,276.1 Z"/><path d="M203.8,274.6 L158.3,261.1 L157.7,262.9 L202.2,279.4 Z"/><path d="M205.0,276.7 L197.0,230.8 L195.0,231.2 L201.0,277.3 Z"/></g><ellipse cx="190" cy="264" rx="20" ry="13" transform="rotate(45 190 264)" fill="#a088f2" opacity="0.45" filter="url(#bl3)"/><g fill="#5810b0" filter="url(#bl3)" opacity="0.45"><path d="M204.0,278.1 L240.9,250.4 L235.1,243.6 L202.0,275.9 Z"/><path d="M202.1,278.2 L219.9,296.9 L226.1,289.1 L203.9,275.8 Z"/><path d="M202.0,275.9 L172.8,296.2 L179.2,303.8 L204.0,278.1 Z"/></g><g fill="#5c0cb4" filter="url(#bl1)" opacity="0.85"><path d="M203.4,277.5 L238.8,247.9 L237.2,246.1 L202.6,276.5 Z"/><path d="M202.6,277.5 L222.1,294.1 L223.9,291.9 L203.4,276.5 Z"/><path d="M202.6,276.5 L175.1,298.9 L176.9,301.1 L203.4,277.5 Z"/></g><g filter="url(#bl3)" fill="#580cb0" opacity="0.5"><ellipse cx="206" cy="291" rx="16" ry="4.5" transform="rotate(-8 206 291)"/><ellipse cx="196" cy="302" rx="28" ry="7" transform="rotate(-5 196 302)" opacity="0.6"/></g></g><path d="M213.3,280.8 L208.7,282.7 L206.4,286.4 L202.3,285.0 L197.5,286.5 L196.9,282.1 L190.8,281.4 L195.0,277.7 L187.2,274.2 L195.6,273.9 L185.0,264.4 L197.6,271.1 L191.0,256.2 L200.6,269.4 L201.4,259.1 L204.7,269.2 L210.0,264.9 L209.1,271.9 L214.3,272.9 L211.0,277.0 Z" fill="#f8f2ff" filter="url(#bl2)" opacity="0.9"/><path d="M195,280 L180,254 L190,246 L214,272 Z" fill="#f4ecff" filter="url(#bl3)" opacity="0.65"/><g filter="url(#bl2)"><ellipse cx="203" cy="277" rx="10.5" ry="8.5" transform="rotate(-15 203 277)" fill="#fffcff" opacity="0.92"/></g></g><rect x="111.5" y="124.5" width="217" height="216.8" fill="none" stroke="#ffffff" stroke-width="1"/><g fill="none" stroke="#262626" stroke-width="1.2" stroke-dasharray="3,3"><path d="M113.2,124.5 H329"/><path d="M328.5,122 V341.8"/><path d="M109,341.3 H329"/><path d="M111.5,126 V341.8"/></g></g><path d="M0,17.6 H38.2 V43.3 H0 Z M4.3,21.8 V39.3 H33.8 V21.8 Z" fill="#fe0000" fill-rule="evenodd"/>
</svg>
</body></html>
